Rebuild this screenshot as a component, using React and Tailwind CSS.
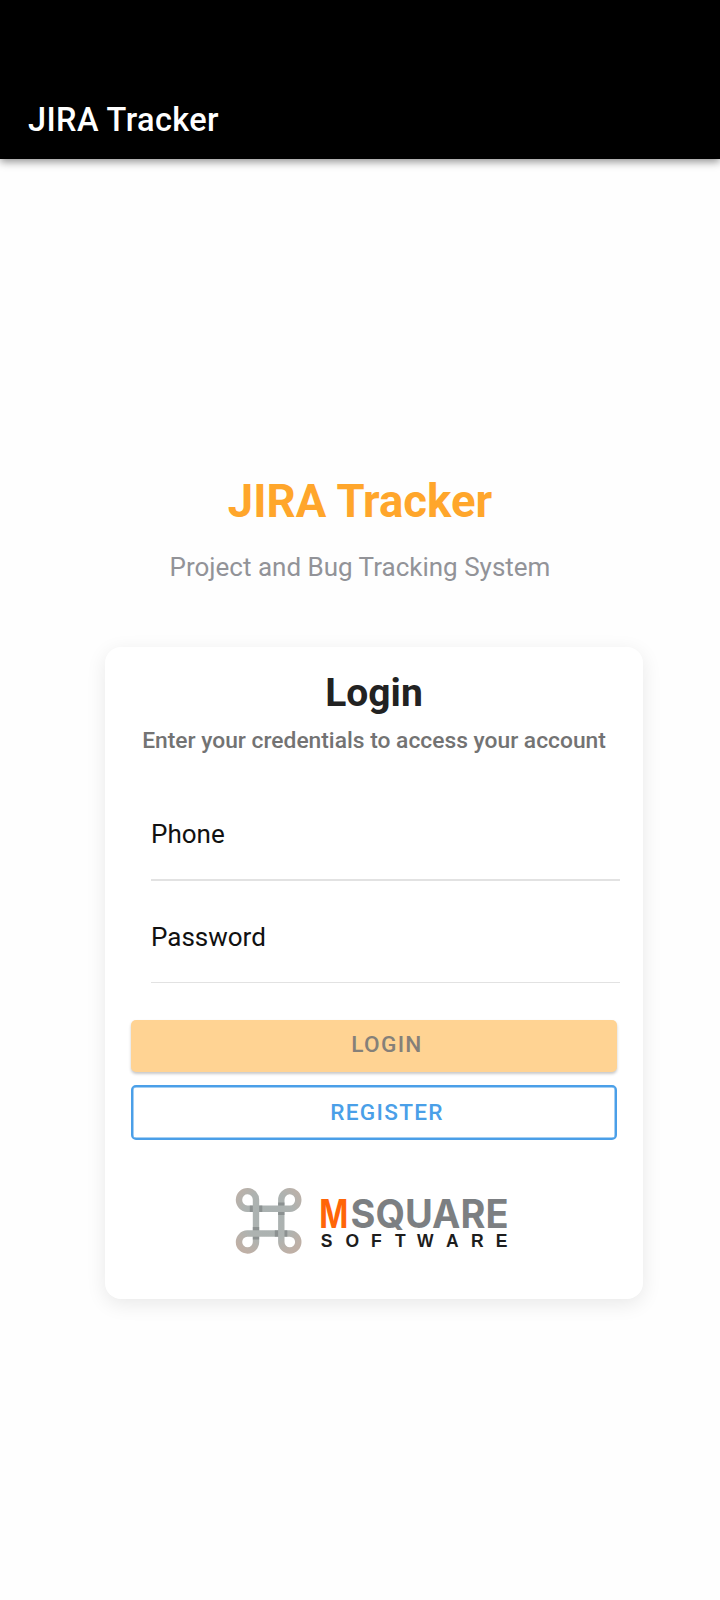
import React from "react";

function Header() {
  return (
    <header className="relative flex h-[159px] items-end bg-black px-7 pb-[15px] shadow-[0_3px_8px_rgba(0,0,0,0.42)]">
      <span className="text-[32.500px] leading-[48px] font-medium tracking-[0.4px] text-white">JIRA Tracker</span>
    </header>
  );
}

function Field({ label, className }) {
  return (
    <label className={"ml-[46px] mr-[23px] block border-[#e2e2e2] text-[26px] leading-8 text-[#111] " + className}>
      {label}
    </label>
  );
}

function Logo() {
  return (
    <svg className="h-[76px] w-[290px]" viewBox="0 0 290 76" role="img" aria-label="MSquare Software">
      <defs>
        <radialGradient id="metal" gradientUnits="userSpaceOnUse" cx="39" cy="34" r="42">
          <stop offset="0" stopColor="#a9b1b1" />
          <stop offset="0.6" stopColor="#aeb3b1" />
          <stop offset="1" stopColor="#bfb0a6" />
        </radialGradient>
      </defs>
      <g transform="translate(-0.700 0)">
        <path
          fill="none"
          stroke="url(#metal)"
          strokeWidth="6.400"
          d="M26.700 39V18.200A8.500 8.800 0 1 0 18 26.700H60.500A8.500 8.800 0 1 0 52 18.200V60A8.500 8.500 0 1 0 60.500 51.500H18A8.500 8.500 0 1 0 26.700 60V39"
        />
        <path
          fill="none"
          stroke="#7d8383"
          strokeWidth="6.400"
          opacity="0.7"
          d="M20.500 26.700H23.500M29.900 26.700H33M52 20.500V23.500M52 29.900V33M26.700 45V48.300M26.700 54.700V57.500M45.500 51.500H48.800M55.200 51.500H58"
        />
      </g>
      <g fontFamily="Inter, sans-serif" fontWeight="700" fontSize="39">
        <text x="89.300" y="46" fill="#ff6508" textLength="29" lengthAdjust="spacingAndGlyphs">M</text>
        <text x="120.500" y="46" fill="#7c7f82" textLength="158" lengthAdjust="spacingAndGlyphs">SQUARE</text>
      </g>
      <text
        x="96.500 122.300 146.300 170.300 195.300 222.300 247.300 271.700"
        y="64.500"
        textAnchor="middle"
        fill="#1d1d1d"
        fontFamily="Liberation Sans, sans-serif"
        fontWeight="700"
        fontSize="17.500"
      >
        SOFTWARE
      </text>
    </svg>
  );
}

export default function App() {
  return (
    <div className="flex h-[1600px] w-[720px] flex-col overflow-hidden bg-[#fefefe] font-[Roboto,sans-serif]">
      <Header />
      <main className="flex flex-col pt-[313px]">
        <h1 className="text-center text-[45.500px] leading-[60px] font-bold text-[#ffa62b]">JIRA Tracker</h1>
        <p className="mt-[19px] text-center text-[26px] leading-8 text-[#929398]">Project and Bug Tracking System</p>
        <section className="mt-16 ml-[105px] flex h-[652px] w-[538px] flex-col rounded-[16px] bg-white pt-[23px] shadow-[0_5px_20px_rgba(0,0,0,0.09)]">
          <h2 className="text-center text-[39px] leading-[46px] font-bold text-[#222]">Login</h2>
          <p className="mt-[11px] text-center text-[22.800px] leading-7 font-medium whitespace-nowrap text-[#737373]">
            Enter your credentials to access your account
          </p>
          <Field label="Phone" className="mt-8 h-[94px] border-b-2 pt-[31px]" />
          <Field label="Password" className="h-[102px] border-b pt-10" />
          <div className="mt-[37px] mr-[26px] ml-[26px] flex flex-col gap-[13px] text-[22.600px] font-medium tracking-[1.3px]">
            <button className="h-[52px] rounded-[5px] bg-[#ffd393] pb-0.5 pl-[26px] text-[#858079] shadow-[0_2px_3px_rgba(0,0,0,0.22)]">LOGIN</button>
            <button className="h-[55px] rounded-[5px] border-2 border-[#4a9fe8] pl-[26px] text-[#4a9fe8] shadow-[inset_0_0_0_0.5px_#4a9fe8]">REGISTER</button>
          </div>
          <div className="mt-[42px] ml-[125px]">
            <Logo />
          </div>
        </section>
      </main>
    </div>
  );
}
